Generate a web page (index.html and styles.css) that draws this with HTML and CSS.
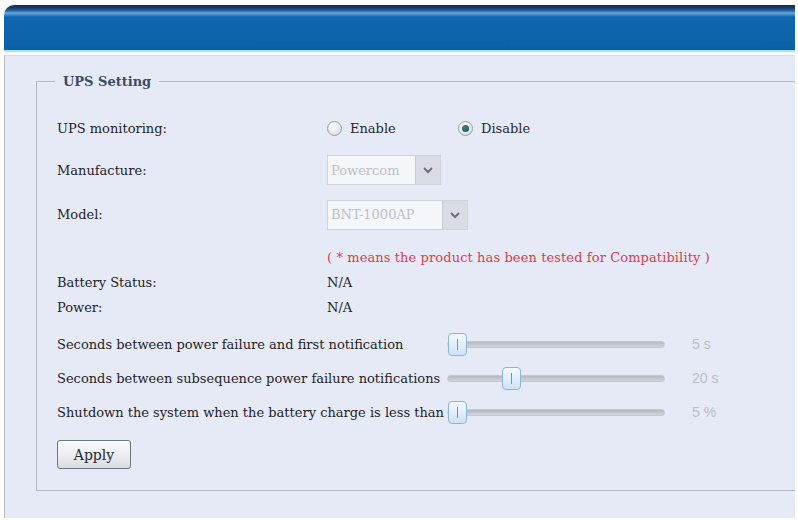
FILE: index.html
```html
<!DOCTYPE html>
<html>
<head>
<meta charset="utf-8">
<link rel="stylesheet" href="styles.css">
</head>
<body>
<div class="page">
  <div class="header"></div>
  <div class="panel">
    <fieldset class="box">
      <legend class="legend">UPS Setting</legend>
      <div class="row r-mon">
        <div class="label">UPS monitoring:</div>
        <div class="value radios">
          <span class="radio"><span class="dot"></span>Enable</span>
          <span class="radio checked"><span class="dot"></span>Disable</span>
        </div>
      </div>
      <div class="row r-man">
        <div class="label">Manufacture:</div>
        <div class="value">
          <span class="select s-man"><span class="sel-text">Powercom</span><span class="sel-btn"><svg width="12" height="8" viewBox="0 0 12 8"><path d="M2 2 L6 6 L10 2" fill="none" stroke="#6b717b" stroke-width="2"/></svg></span></span>
        </div>
      </div>
      <div class="row r-mod">
        <div class="label">Model:</div>
        <div class="value">
          <span class="select s-mod"><span class="sel-text">BNT-1000AP</span><span class="sel-btn"><svg width="12" height="8" viewBox="0 0 12 8"><path d="M2 2 L6 6 L10 2" fill="none" stroke="#6b717b" stroke-width="2"/></svg></span></span>
        </div>
      </div>
      <div class="row r-note">
        <div class="label"></div>
        <div class="value note">( * means the product has been tested for Compatibility )</div>
      </div>
      <div class="row r-small r-bat">
        <div class="label">Battery Status:</div>
        <div class="value">N/A</div>
      </div>
      <div class="row r-small">
        <div class="label">Power:</div>
        <div class="value">N/A</div>
      </div>
      <div class="row slide-row r-s1">
        <div class="slabel">Seconds between power failure and first notification</div>
        <div class="track"><span class="thumb" style="left:0px"></span></div>
        <div class="sval">5 s</div>
      </div>
      <div class="row slide-row">
        <div class="slabel">Seconds between subsequence power failure notifications</div>
        <div class="track"><span class="thumb" style="left:54px"></span></div>
        <div class="sval">20 s</div>
      </div>
      <div class="row slide-row">
        <div class="slabel">Shutdown the system when the battery charge is less than</div>
        <div class="track"><span class="thumb" style="left:0px"></span></div>
        <div class="sval">5 %</div>
      </div>
      <div class="actions">
        <button class="btn">Apply</button>
      </div>
    </fieldset>
  </div>
</div>
</body>
</html>
```
FILE: styles.css
```css
html, body {
  margin: 0;
  padding: 0;
  background: #ffffff;
}
body {
  width: 798px;
  height: 520px;
  overflow: hidden;
  font-family: "DejaVu Serif", "Liberation Serif", serif;
  color: #1f2328;
}
.page {
  padding: 5px 3px 0 4px;
  display: flex;
  flex-direction: column;
}
.header {
  height: 47px;
  border-top-left-radius: 10px;
  background: linear-gradient(to bottom,
    #0e2a52 0px, #163f74 3px, #2a66a6 6px, #6aa8dc 8px, #3c86c8 10px,
    #0f66ae 12px, #0c63aa 40px, #0a5fa4 45px, #a8e6f4 45px, #a8e6f4 47px);
}
.panel {
  margin-top: 3px;
  height: 463px;
  background: #e6eaf6;
  border-left: 1px solid #b9bdc8;
  border-top: 1px solid #d6dae4;
  padding: 0 0 0 31px;
  box-sizing: border-box;
}
.box {
  margin: 18px 0 0 0;
  border: 1px solid #b5b9c3;
  border-right: none;
  padding: 24px 0 21px 20px;
  min-width: 0;
  display: flex;
  flex-direction: column;
}
.legend {
  margin-left: -2px;
  padding: 0 8px;
  font-weight: bold;
  font-size: 13px;
  color: #3b4a6b;
}
.row {
  display: flex;
  align-items: center;
  font-size: 13px;
}
.label {
  width: 270px;
  flex: none;
}
.value {
  display: flex;
  align-items: center;
}
.r-mon { height: 30px; }
.r-man { height: 30px; margin-top: 12px; }
.r-mod { height: 31px; margin-top: 14px; }
.r-note { height: 20px; margin-top: 17px; }
.r-small { height: 20px; margin-top: 5px; }
.r-bat { margin-top: 5px; }
.radio {
  display: inline-flex;
  align-items: center;
  width: 131px;
  font-size: 13px;
  color: #262a30;
}
.dot {
  width: 13px;
  height: 13px;
  border-radius: 50%;
  border: 1px solid #9aa0a8;
  background: radial-gradient(circle at 40% 35%, #ffffff 0, #e4e6ea 60%, #c8ccd2 100%);
  margin-right: 8px;
  position: relative;
  flex: none;
}
.radio.checked .dot::after {
  content: "";
  position: absolute;
  left: 3px;
  top: 3px;
  width: 7px;
  height: 7px;
  border-radius: 50%;
  background: radial-gradient(circle at 40% 35%, #3e7e86 0, #1d4f58 100%);
}
.select {
  display: inline-flex;
  height: 30px;
  border: 1px solid #cfd3dc;
  background: #f5f6fa;
  box-sizing: border-box;
}
.sel-text {
  display: flex;
  align-items: center;
  padding: 0 3px;
  color: #bcc0c8;
  font-size: 13px;
  white-space: nowrap;
  overflow: hidden;
}
.s-man .sel-text { width: 81px; }
.s-mod .sel-text { width: 108px; }
.sel-btn {
  width: 24px;
  display: flex;
  align-items: center;
  justify-content: center;
  background: #d9dce3;
  border-left: 1px solid #c8ccd5;
}
.note {
  color: #d6404e;
  font-size: 13px;
  letter-spacing: 0.1px;
}
.slide-row {
  height: 24px;
  margin-top: 10px;
  font-size: 13px;
}
.r-s1 { margin-top: 15px; }
.slabel {
  width: 390px;
  flex: none;
  white-space: nowrap;
  color: #1f2328;
}
.track {
  position: relative;
  width: 218px;
  height: 7px;
  border-radius: 4px;
  background: linear-gradient(to bottom, #b4b8c0, #d2d5dc);
  border: 1px solid #c2c6ce;
  box-sizing: border-box;
}
.thumb {
  position: absolute;
  top: -9px;
  width: 19px;
  height: 23px;
  box-sizing: border-box;
  border: 1px solid #8fb4dc;
  border-radius: 4px;
  background: linear-gradient(to bottom, #f4f9ff, #cfe2f6);
}
.thumb::after {
  content: "";
  position: absolute;
  left: 8px;
  top: 5px;
  width: 1px;
  height: 11px;
  background: #6e94c0;
}
.sval {
  margin-left: 27px;
  color: #b9bdc6;
  font-family: "Liberation Sans", "DejaVu Sans", sans-serif;
  font-size: 14px;
}
.actions {
  margin-top: 16px;
  display: flex;
}
.btn {
  width: 74px;
  height: 29px;
  border: 1px solid #6f7680;
  border-radius: 3px;
  background: linear-gradient(to bottom, #fbfbfc 0%, #eceef2 50%, #d8dbe1 100%);
  font-family: "DejaVu Serif", "Liberation Serif", serif;
  font-size: 14px;
  color: #262a30;
  padding: 0;
}
```
